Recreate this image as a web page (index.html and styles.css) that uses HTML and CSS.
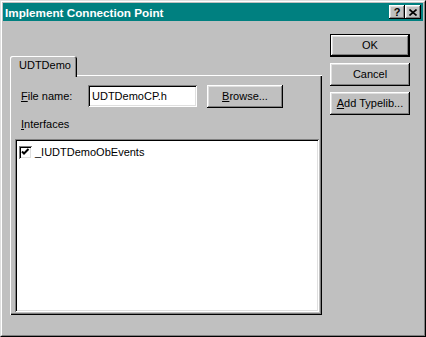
FILE: index.html
```html
<!DOCTYPE html>
<html>
<head>
<meta charset="utf-8">
<link rel="stylesheet" href="styles.css">
</head>
<body>
<div class="window">
  <div class="frame">
    <div class="titlebar">
      <span class="title">Implement Connection Point</span>
      <div class="caption-buttons">
        <span class="cbtn help">?</span>
        <span class="cbtn close"><svg width="8" height="7" viewBox="0 0 8 7"><path d="M0.5 0.5 L7.5 6.5 M7.5 0.5 L0.5 6.5" stroke="#000" stroke-width="1.6" fill="none"/></svg></span>
      </div>
    </div>
    <div class="content">
      <div class="tabs">
        <div class="tabstrip"><div class="tab">UDTDemo</div></div>
        <div class="panel">
          <div class="row">
            <span class="label"><u>F</u>ile name:</span>
            <div class="edit">UDTDemoCP.h</div>
            <div class="btn browse"><u>B</u>rowse...</div>
          </div>
          <div class="iflabel"><u>I</u>nterfaces</div>
          <div class="listbox">
            <div class="item">
              <span class="check"><svg width="9" height="9" viewBox="0 0 9 9"><path d="M1 3.5 L3 5.5 L7.5 1" stroke="#000" stroke-width="2" fill="none"/></svg></span>
              <span>_IUDTDemoObEvents</span>
            </div>
          </div>
        </div>
      </div>
      <div class="buttons">
        <div class="btn default">OK</div>
        <div class="btn">Cancel</div>
        <div class="btn"><u>A</u>dd Typelib...</div>
      </div>
    </div>
  </div>
</div>
</body>
</html>
```
FILE: styles.css
```css
* { box-sizing: border-box; }
html, body { margin: 0; padding: 0; }
body {
  background: #c0c0c0;
  font-family: "Liberation Sans", Arial, sans-serif;
  font-size: 11px;
  line-height: 13px;
  color: #000;
}
u { text-decoration: underline; text-underline-offset: 1px; }
.window {
  width: 426px;
  height: 337px;
  border: 1px solid;
  border-color: #dfdfdf #000 #000 #dfdfdf;
  background: #c0c0c0;
}
.frame {
  height: 100%;
  border: 1px solid;
  border-color: #fff #808080 #808080 #fff;
  padding: 1px;
  display: flex;
  flex-direction: column;
}
.titlebar {
  height: 18px;
  flex: none;
  background: #008080;
  color: #fff;
  font-weight: bold;
  display: flex;
  align-items: center;
  justify-content: space-between;
  padding: 0 2px 0 2px;
}
.title { font-size: 11.7px; }
.caption-buttons { display: flex; }
.cbtn {
  width: 16px;
  height: 14px;
  background: #c0c0c0;
  color: #000;
  display: flex;
  align-items: center;
  justify-content: center;
  box-shadow: inset -1px -1px #000, inset 1px 1px #fff, inset -2px -2px #808080, inset 2px 2px #dfdfdf;
}
.cbtn.help { font-size: 11px; font-weight: bold; padding-top: 1px; }
.cbtn.close svg { display: block; }
.content { display: flex; flex: 1; }
.tabs {
  margin: 35px 0 0 7px;
  width: 312px;
  display: flex;
  flex-direction: column;
}
.tabstrip { display: flex; height: 19px; }
.tab {
  position: relative;
  z-index: 1;
  width: 67px;
  height: 21px;
  padding: 3px 0 0 9px;
  background: #c0c0c0;
  border-radius: 2px 3px 0 0;
  box-shadow: inset 1px 1px #fff, inset -1px 0 #000, inset -2px 0 #808080;
}
.panel {
  height: 240px;
  padding: 10px 3px 3px 5px;
  display: flex;
  flex-direction: column;
  box-shadow: inset 1px 1px #fff, inset -1px -1px #000, inset -2px -2px #808080;
}
.row { display: flex; align-items: flex-start; margin-left: 6px; }
.label { width: 67px; line-height: 22px; }
.edit {
  width: 109px;
  height: 22px;
  background: #fff;
  padding: 0 4px;
  display: flex;
  align-items: center;
  box-shadow: inset 1px 1px #808080, inset -1px -1px #fff, inset 2px 2px #000, inset -2px -2px #dfdfdf;
}
.btn {
  width: 80px;
  height: 23px;
  display: flex;
  align-items: center;
  justify-content: center;
  background: #c0c0c0;
  box-shadow: inset -1px -1px #000, inset 1px 1px #fff, inset -2px -2px #808080, inset 2px 2px #dfdfdf;
}
.btn.browse { width: 76px; margin-left: 10px; }
.btn.default {
  box-shadow: inset 0 0 0 1px #000, inset -2px -2px #000, inset 2px 2px #fff, inset -3px -3px #808080, inset 3px 3px #dfdfdf;
}
.iflabel { margin: 10px 0 8px 6px; }
.listbox {
  flex: 1;
  background: #fff;
  padding: 7px 4px;
  box-shadow: inset 1px 1px #808080, inset -1px -1px #fff, inset 2px 2px #000, inset -2px -2px #dfdfdf;
}
.item { display: flex; align-items: center; gap: 3px; }
.check {
  width: 13px;
  height: 13px;
  background: #fff;
  display: flex;
  align-items: center;
  justify-content: center;
  box-shadow: inset 1px 1px #808080, inset -1px -1px #fff, inset 2px 2px #000, inset -2px -2px #dfdfdf;
}
.check svg { display: block; }
.buttons {
  margin: 13px 0 0 8px;
  width: 80px;
  display: flex;
  flex-direction: column;
  gap: 6px;
}
```
